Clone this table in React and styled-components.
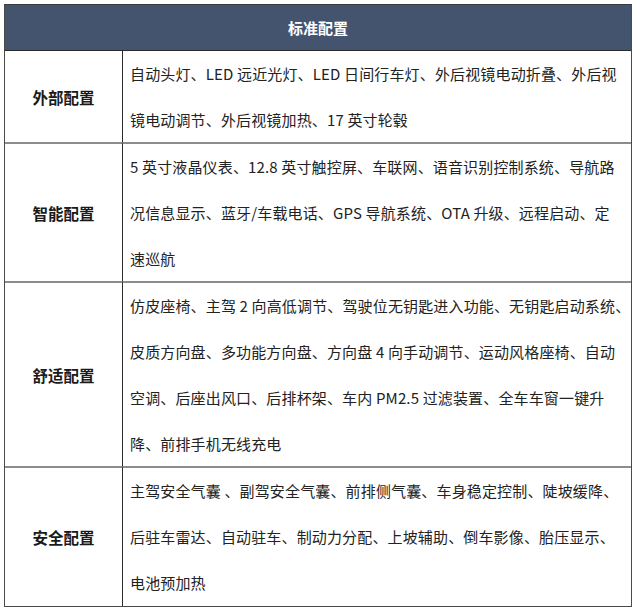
import React from "react";
import styled, { createGlobalStyle } from "styled-components";

const GlobalStyle = createGlobalStyle`
  html, body {
    margin: 0;
    padding: 0;
    background: #ffffff;
  }
  body {
    font-family: "Microsoft YaHei", "Noto Sans CJK SC", "Noto Sans", sans-serif;
    color: #1e1e1e;
  }
`

const Page = styled.div`
  padding: 4px 8px 0 4px;
  width: 640px;
  box-sizing: border-box;
`

const Table = styled.div`
  display: grid;
  grid-template-columns: 118px 1fr;
  border: 1px solid #4a4a4a;
  border-top-color: #3a3a3a;
  width: 628px;
  box-sizing: border-box;
`

const Header = styled.div`
  grid-column: 1 / -1;
  height: 45px;
  background: #44546e;
  color: #ffffff;
  font-weight: 700;
  font-size: 15px;
  display: flex;
  align-items: center;
  justify-content: center;
  border-bottom: 1px solid #2b2b2b;
`

const Label = styled.div`
  display: flex;
  align-items: center;
  justify-content: center;
  font-weight: 700;
  font-size: 15.5px;
  color: #1a1a1a;
  border-right: 1px solid #2a2a2a;
  border-top: ${({ $first }) => ($first ? "none" : "2px solid #8c8c8c")};
  margin-top: ${({ $first }) => ($first ? "0" : "-1px")};
`

const Content = styled.div`
  padding: 0 0 0 7px;
  font-size: 15px;
  line-height: 46px;
  letter-spacing: 0.15px;
  color: #222222;
  border-top: ${({ $first }) => ($first ? "none" : "2px solid #8c8c8c")};
  margin-top: ${({ $first }) => ($first ? "0" : "-1px")};
`

const Line = styled.div`
  white-space: nowrap;
  height: 46px;
`

const rows = [
  {
    label: "外部配置",
    lines: [
      "自动头灯、LED 远近光灯、LED 日间行车灯、外后视镜电动折叠、外后视",
      "镜电动调节、外后视镜加热、17 英寸轮毂",
    ],
  },
  {
    label: "智能配置",
    lines: [
      "5 英寸液晶仪表、12.8 英寸触控屏、车联网、语音识别控制系统、导航路",
      "况信息显示、蓝牙/车载电话、GPS 导航系统、OTA 升级、远程启动、定",
      "速巡航",
    ],
  },
  {
    label: "舒适配置",
    lines: [
      "仿皮座椅、主驾 2 向高低调节、驾驶位无钥匙进入功能、无钥匙启动系统、",
      "皮质方向盘、多功能方向盘、方向盘 4 向手动调节、运动风格座椅、自动",
      "空调、后座出风口、后排杯架、车内 PM2.5 过滤装置、全车车窗一键升",
      "降、前排手机无线充电",
    ],
  },
  {
    label: "安全配置",
    lines: [
      "主驾安全气囊 、副驾安全气囊、前排侧气囊、车身稳定控制、陡坡缓降、",
      "后驻车雷达、自动驻车、制动力分配、上坡辅助、倒车影像、胎压显示、",
      "电池预加热",
    ],
  },
]

export default function App() {
  return (
    <Page>
      <GlobalStyle />
      <Table>
        <Header>标准配置</Header>
        {rows.map((row, i) => (
          <React.Fragment key={row.label}>
            <Label $first={i === 0}>{row.label}</Label>
            <Content $first={i === 0}>
              {row.lines.map((line) => (
                <Line key={line}>{line}</Line>
              ))}
            </Content>
          </React.Fragment>
        ))}
      </Table>
    </Page>
  )
}
